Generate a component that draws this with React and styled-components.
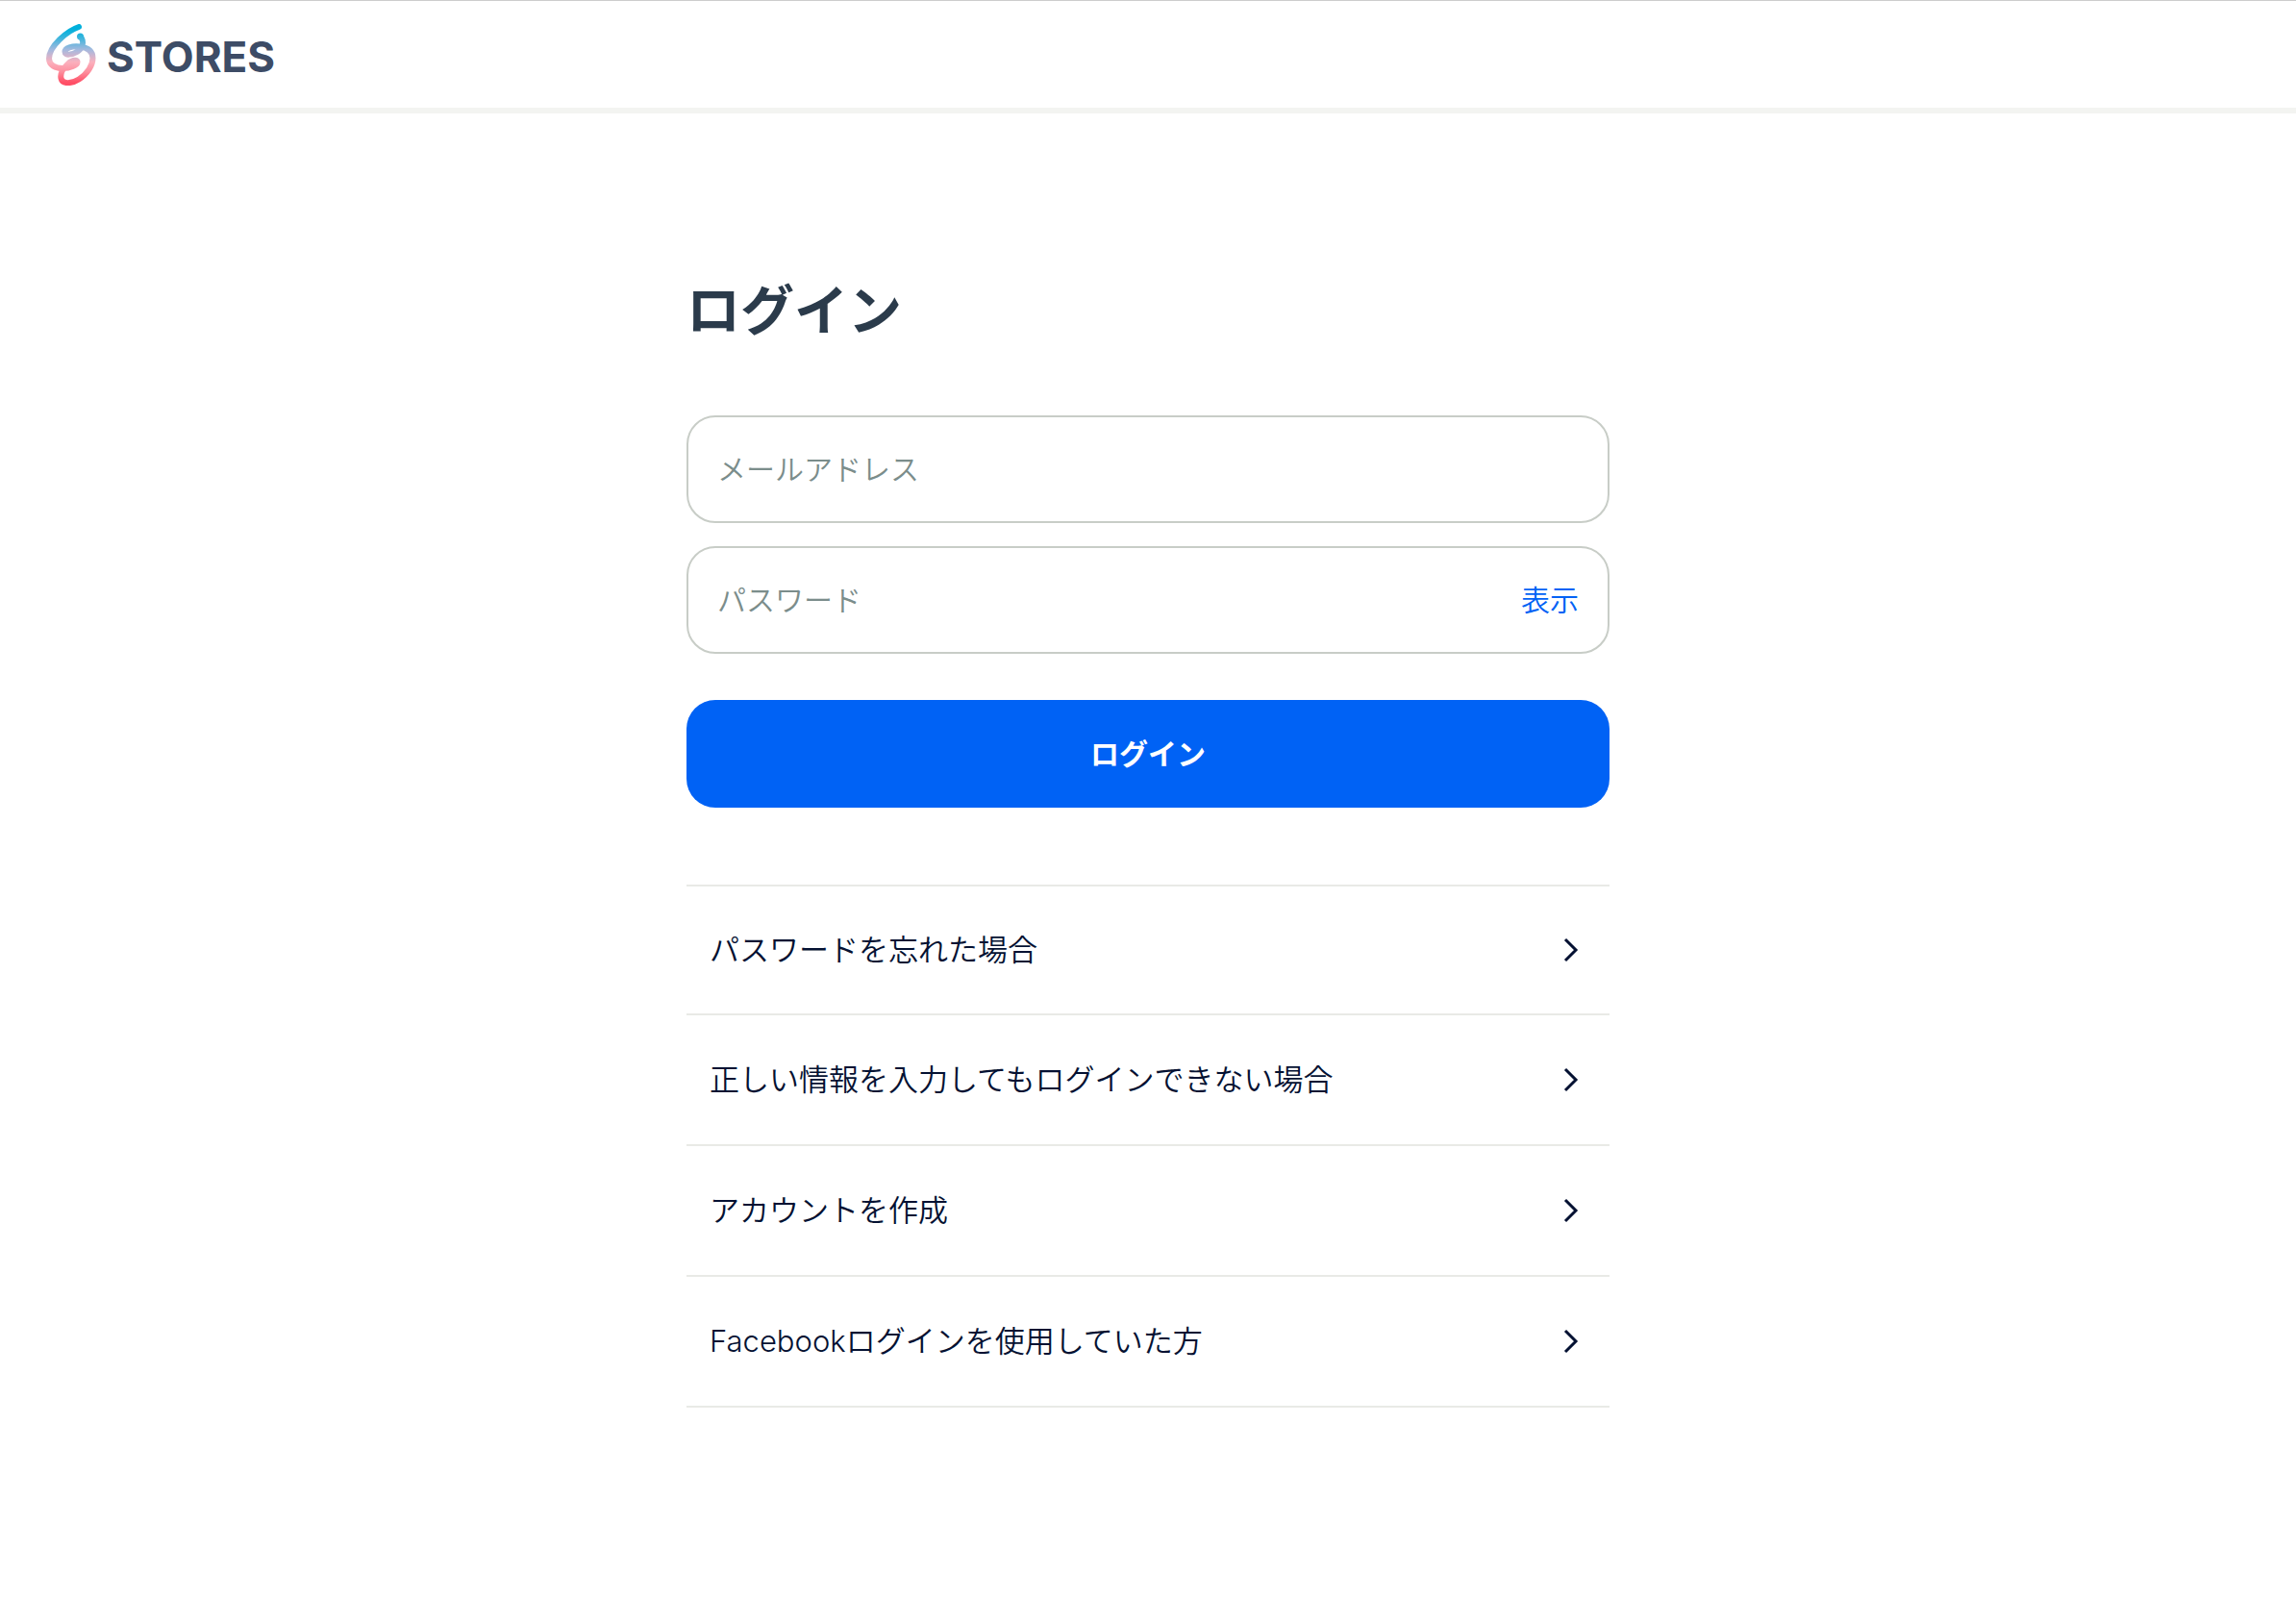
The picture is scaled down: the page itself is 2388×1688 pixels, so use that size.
import React, { useState } from "react";
import styled, { createGlobalStyle } from "styled-components";

const GlobalStyle = createGlobalStyle`
  *, *::before, *::after { box-sizing: border-box; }
  body {
    margin: 0;
    background: #fff;
    color: #041132;
    font-family: "Noto Sans CJK JP", sans-serif;
    font-size: 30px;
    line-height: 44px;
    font-weight: 350;
  }
`;

const Header = styled.header`
  display: flex;
  align-items: center;
  height: 118px;
  padding: 0 48px;
  border-top: 1px solid #ccc;
  border-bottom: 6px solid #f3f4f1;
`;

const Brand = styled.a`
  display: flex;
  align-items: center;
  gap: 11px;
  color: #3d4c66;
  text-decoration: none;
`;

const Mark = styled.svg`
  display: block;
  width: 52px;
  height: 64px;
`;

const Wordmark = styled.span`
  padding-top: 5px;
  font-family: Inter, sans-serif;
  font-size: 44px;
  line-height: 52px;
  font-weight: 700;
`;

const Main = styled.main`
  max-width: 960px;
  margin: 0 auto;
  padding: 164px 0 80px;
`;

const Title = styled.h1`
  margin: 0 0 76px;
  color: #2b3b4b;
  font-size: 56px;
  line-height: 74px;
  font-weight: 700;
`;

const Form = styled.form`
  display: flex;
  flex-direction: column;
  gap: 24px;
`;

const Field = styled.div`
  display: flex;
  align-items: center;
  height: 112px;
  padding: 0 30px 4px;
  border: 2px solid #c8cdc7;
  border-radius: 30px;
`;

const Input = styled.input`
  flex: 1;
  min-width: 0;
  height: 100%;
  padding: 0;
  border: 0;
  outline: 0;
  background: transparent;
  color: inherit;
  font: inherit;

  &::placeholder {
    color: #7b8d8b;
    opacity: 1;
  }
`;

const Reveal = styled.button`
  padding: 0;
  border: 0;
  background: none;
  color: #0062f5;
  font: inherit;
  cursor: pointer;
`;

const Submit = styled.button`
  height: 112px;
  margin-top: 24px;
  padding: 0 0 4px;
  border: 0;
  border-radius: 30px;
  background: #0062f5;
  color: #fff;
  font: inherit;
  font-weight: 700;
  cursor: pointer;
`;

const HelpList = styled.ul`
  margin: 80px 0 0;
  padding: 0;
  list-style: none;
  font-family: Inter, "Noto Sans CJK JP", sans-serif;
  font-size: 31px;
`;

const HelpItem = styled.li`
  display: flex;
  height: 136px;
  border-bottom: 2px solid #e9eae6;

  &:first-child {
    border-top: 2px solid #e9eae6;
  }
`;

const HelpLink = styled.a`
  flex: 1;
  display: flex;
  align-items: center;
  justify-content: space-between;
  padding: 0 32px 0 24px;
  color: inherit;
  text-decoration: none;
`;

const Chevron = styled.svg`
  display: block;
  width: 16px;
  height: 26px;
  flex: none;
`;

const helpLinks = [
  "パスワードを忘れた場合",
  "正しい情報を入力してもログインできない場合",
  "アカウントを作成",
  "Facebookログインを使用していた方",
];

export default function App() {
  const [visible, setVisible] = useState(false);

  return (
    <>
      <GlobalStyle />
      <Header>
        <Brand href="#">
          <Mark viewBox="48 24 52 64" fill="none" aria-hidden="true">
            <defs>
              <linearGradient id="ribbon" gradientUnits="userSpaceOnUse" x1="74" y1="24" x2="74" y2="88">
                <stop offset="0.08" stopColor="#00b0dc" />
                <stop offset="0.2" stopColor="#2fb4dc" />
                <stop offset="0.42" stopColor="#a5b9de" />
                <stop offset="0.62" stopColor="#fbb0bd" />
                <stop offset="0.78" stopColor="#fd8e9d" />
                <stop offset="0.95" stopColor="#ff4f66" />
              </linearGradient>
            </defs>
            <path
              d="M82 27C70 31 51 47 51 60C51 67 58 70 65 70C73 70 80.500 67 80.500 63.500C80.500 60 73 62 69.500 66.500C65 71 62.500 76 63.500 80.500C65 87 75 86 82 81.500C91 75.500 96.500 67 96.500 59.500C96.500 52 91 48.500 83 47.500C75 46.500 67.500 49 67.500 53C67.500 57 75 56 80 53C86 49 87.500 43 84.500 38"
              stroke="url(#ribbon)"
              strokeWidth="6"
              strokeLinecap="round"
              strokeLinejoin="round"
            />
            <circle cx="83.500" cy="37" r="3.500" fill="url(#ribbon)" />
          </Mark>
          <Wordmark>STORES</Wordmark>
        </Brand>
      </Header>
      <Main>
        <Title>ログイン</Title>
        <Form onSubmit={(e) => e.preventDefault()}>
          <Field>
            <Input type="email" aria-label="メールアドレス" placeholder="メールアドレス" />
          </Field>
          <Field>
            <Input
              type={visible ? "text" : "password"}
              aria-label="パスワード"
              placeholder="パスワード"
            />
            <Reveal type="button" onClick={() => setVisible(!visible)}>
              表示
            </Reveal>
          </Field>
          <Submit type="submit">ログイン</Submit>
        </Form>
        <HelpList>
          {helpLinks.map((text) => (
            <HelpItem key={text}>
              <HelpLink href="#">
                {text}
                <Chevron viewBox="0 0 16 26" fill="none" aria-hidden="true">
                  <path d="M2 2L13 13L2 24" stroke="currentColor" strokeWidth="3" />
                </Chevron>
              </HelpLink>
            </HelpItem>
          ))}
        </HelpList>
      </Main>
    </>
  );
}
